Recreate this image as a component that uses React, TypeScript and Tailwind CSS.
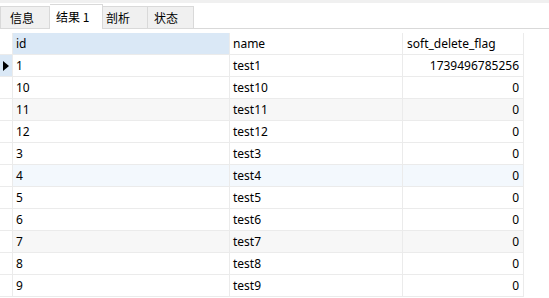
import React from "react";

const rows: { id: string; name: string; flag: string; bg: string }[] = [
  { id: "1", name: "test1", flag: "1739496785256", bg: "bg-white" },
  { id: "10", name: "test10", flag: "0", bg: "bg-white" },
  { id: "11", name: "test11", flag: "0", bg: "bg-[#f7f7f7]" },
  { id: "12", name: "test12", flag: "0", bg: "bg-white" },
  { id: "3", name: "test3", flag: "0", bg: "bg-white" },
  { id: "4", name: "test4", flag: "0", bg: "bg-[#f3f8fd]" },
  { id: "5", name: "test5", flag: "0", bg: "bg-white" },
  { id: "6", name: "test6", flag: "0", bg: "bg-white" },
  { id: "7", name: "test7", flag: "0", bg: "bg-[#f7f7f7]" },
  { id: "8", name: "test8", flag: "0", bg: "bg-white" },
  { id: "9", name: "test9", flag: "0", bg: "bg-white" },
];

const font = { fontFamily: '"Noto Sans", "Noto Sans CJK SC", sans-serif' };

export default function App() {
  const cell = "h-[22px] border-r border-b border-[#ebebeb] flex items-center text-[12px] text-black";
  return (
    <div className="w-[549px] h-[298px] overflow-hidden bg-white" style={font}>
      {/* tab bar */}
      <div className="h-[29px] border-t-[3px] border-[#f0f0f0] border-b border-b-[#d9d9d9] flex items-end">
        <div className="h-[22px] w-[50px] bg-[#f0f0f0] border border-b-0 border-[#d9d9d9] flex items-center pl-[9px] text-[12px] text-black" style={{ fontFamily: '"Noto Sans CJK SC", sans-serif' }}>
          信息
        </div>
        <div className="h-[25px] w-[53px] -mb-px bg-white border border-b-0 border-l-0 border-[#d9d9d9] flex items-center pl-[6px] text-[12px] text-black" style={{ fontFamily: '"Noto Sans CJK SC", sans-serif' }}>
          结果 1
        </div>
        <div className="h-[22px] w-[45px] bg-[#f0f0f0] border border-b-0 border-l-0 border-[#d9d9d9] flex items-center pl-[3px] text-[12px] text-black" style={{ fontFamily: '"Noto Sans CJK SC", sans-serif' }}>
          剖析
        </div>
        <div className="h-[22px] w-[46px] bg-[#f0f0f0] border border-b-0 border-l-0 border-[#d9d9d9] flex items-center pl-[6px] text-[12px] text-black" style={{ fontFamily: '"Noto Sans CJK SC", sans-serif' }}>
          状态
        </div>
      </div>
      {/* grid */}
      <div className="mt-[4px] grid grid-cols-[13px_217px_173px_121px]">
        <div className={`${cell} bg-white`} />
        <div className={`${cell} bg-[#dae8f6] pl-[3px]`}>id</div>
        <div className={`${cell} bg-white pl-[3px]`}>name</div>
        <div className={`${cell} bg-white pl-[4px]`}>soft_delete_flag</div>
        {rows.map((r, i) => (
          <React.Fragment key={r.id}>
            <div className={`${cell} ${i === 0 ? "bg-[#dae8f6]" : "bg-white"} justify-center`}>
              {i === 0 && (
                <svg width="6" height="10" viewBox="0 0 6 10">
                  <path d="M0 0 L6 5 L0 10 Z" fill="#000" />
                </svg>
              )}
            </div>
            <div className={`${cell} ${r.bg} pl-[3px]`}>{r.id}</div>
            <div className={`${cell} ${r.bg} pl-[3px]`}>{r.name}</div>
            <div className={`${cell} ${r.bg} justify-end pr-[4px]`}>{r.flag}</div>
          </React.Fragment>
        ))}
      </div>
    </div>
  );
}
